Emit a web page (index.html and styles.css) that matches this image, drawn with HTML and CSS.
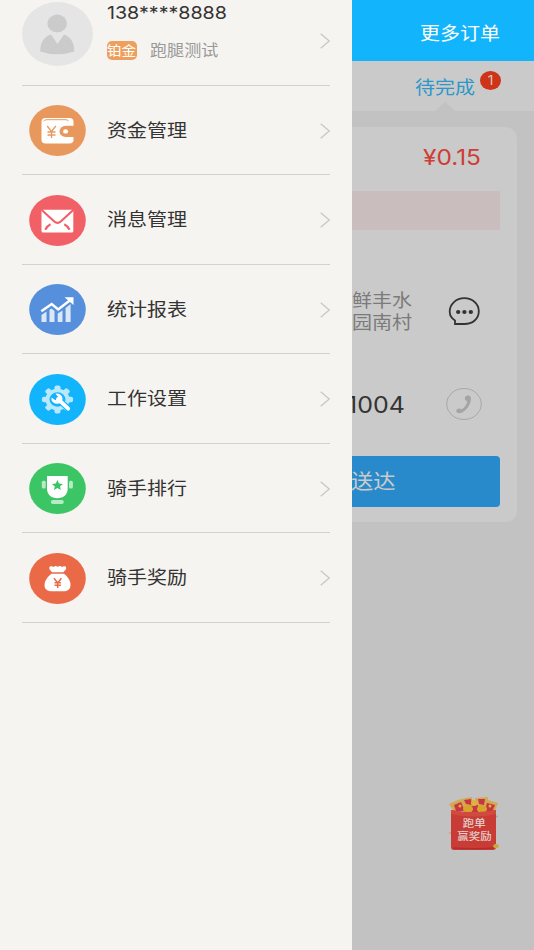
FILE: index.html
```html
<!DOCTYPE html>
<html lang="zh-CN">
<head>
<meta charset="utf-8">
<title>骑手</title>
<link rel="stylesheet" href="styles.css">
</head>
<body>
<div class="screen">
  <aside class="drawer">
    <section class="profile">
      <svg class="avatar" viewBox="0 0 71 64" width="71" height="64">
        <ellipse cx="35.5" cy="32" rx="35.5" ry="32" fill="#e5e5e5"/>
        <ellipse cx="35.2" cy="21.5" rx="9.8" ry="9" fill="#cbcbcb"/>
        <path d="M18.3 49.500C18 41 22 34.500 29 32.500L35.500 42L42 32.500C49 35 52.500 41 52.200 49.500Q44 52.300 35 52.300Q26 52.300 18.300 49.500Z" fill="#cbcbcb"/>
      </svg>
      <div class="who">
        <div class="phone"><span class="wide">138****8888</span></div>
        <div class="meta"><span class="level"><span class="wide">铂金</span></span><span class="name"><span class="wide">跑腿测试</span></span></div>
      </div>
      <svg class="chevron" viewBox="0 0 10 16" width="10" height="16"><path d="M.7 .7L9.300 8L.7 15.300"/></svg>
    </section>
    <nav class="menu">
      <a class="item">
        <svg class="icon" viewBox="0 0 57 51" width="57" height="51">
          <ellipse cx="28.500" cy="25.500" rx="28.300" ry="25.500" fill="#e9985d"/>
          <rect x="12.500" y="13" width="32" height="25.500" rx="4" fill="#fff"/>
          <path d="M14.500 16.100Q15.500 14.700 18 14.700H37Q39 14.700 39.400 16.100" fill="none" stroke="#e9985d" stroke-width="1"/>
          <path d="M45 20.800H36.500A6 5.600 0 0 0 36.500 32H45Z" fill="#e9985d"/>
          <ellipse cx="36.600" cy="26.400" rx="2.500" ry="2.200" fill="#fff"/>
          <path d="M18.200 21L22.500 26.500L26.800 21M22.500 26.500V33M18.500 27H26.500M18.500 30H26.500" fill="none" stroke="#e9985d" stroke-width="1.300"/>
        </svg>
        <span class="label wide">资金管理</span>
        <svg class="chevron" viewBox="0 0 10 16" width="10" height="16"><path d="M.7 .7L9.300 8L.7 15.300"/></svg>
      </a>
      <a class="item">
        <svg class="icon" viewBox="0 0 57 51" width="57" height="51">
          <ellipse cx="28.500" cy="25.500" rx="28.300" ry="25.500" fill="#f16067"/>
          <rect x="12.500" y="14.800" width="31.800" height="22.700" rx="1.500" fill="#fff"/>
          <path d="M13 15.300L25 26.300Q28.500 29.500 32 26.300L44 15.300M16.200 34.800Q18 31 21.500 29.200M40.600 34.800Q38.800 31 35.300 29.200" fill="none" stroke="#f16067" stroke-width="2.100"/>
        </svg>
        <span class="label wide">消息管理</span>
        <svg class="chevron" viewBox="0 0 10 16" width="10" height="16"><path d="M.7 .7L9.300 8L.7 15.300"/></svg>
      </a>
      <a class="item">
        <svg class="icon" viewBox="0 0 57 51" width="57" height="51">
          <ellipse cx="28.500" cy="25.500" rx="28.300" ry="25.500" fill="#568fdb"/>
          <path d="M12.500 31L17.500 27.500V38H12.500ZM20.500 25.800L22.500 24.500L25.500 27V38H20.500ZM28.700 29.500L33.500 26.500V38H28.700ZM36.600 24L41.600 20V38H36.600Z" fill="#dce8f8"/>
          <path d="M12.300 27.200L22.700 20L29.200 25.400L41 16.300" fill="none" stroke="#fff" stroke-width="2.500"/>
          <path d="M35.500 13.200H44.500V21Z" fill="#fff"/>
        </svg>
        <span class="label wide">统计报表</span>
        <svg class="chevron" viewBox="0 0 10 16" width="10" height="16"><path d="M.7 .7L9.300 8L.7 15.300"/></svg>
      </a>
      <a class="item">
        <svg class="icon" viewBox="0 0 57 51" width="57" height="51">
          <ellipse cx="28.500" cy="25.500" rx="28.300" ry="25.500" fill="#12b5fb"/>
          <g transform="translate(28.500 25.500) scale(1.110 1)" fill="#b9e8fd">
            <circle r="10.800"/>
            <rect x="-2.700" y="-14" width="5.400" height="28" rx="1.800"/>
            <rect x="-2.700" y="-14" width="5.400" height="28" rx="1.800" transform="rotate(45)"/>
            <rect x="-2.700" y="-14" width="5.400" height="28" rx="1.800" transform="rotate(90)"/>
            <rect x="-2.700" y="-14" width="5.400" height="28" rx="1.800" transform="rotate(135)"/>
            <circle r="7.200" fill="#12b5fb"/>
          </g>
          <path d="M29 25L40 35.200" stroke="#12b5fb" stroke-width="6.200" stroke-linecap="round"/>
          <path d="M29 25L39.200 34.700" stroke="#fff" stroke-width="3.800" stroke-linecap="round"/>
          <path d="M26.500 19.800A5.600 5.100 0 1 1 22.500 23.600L26.500 26.300L29.600 23.500Z" fill="#fff"/>
        </svg>
        <span class="label wide">工作设置</span>
        <svg class="chevron" viewBox="0 0 10 16" width="10" height="16"><path d="M.7 .7L9.300 8L.7 15.300"/></svg>
      </a>
      <a class="item">
        <svg class="icon" viewBox="0 0 57 51" width="57" height="51">
          <ellipse cx="28.500" cy="25.500" rx="28.300" ry="25.500" fill="#3cc565"/>
          <rect x="12.800" y="17.800" width="3.900" height="7.800" rx="1.500" fill="#b9eac8"/>
          <rect x="40" y="17.800" width="3.900" height="7.800" rx="1.500" fill="#b9eac8"/>
          <rect x="22" y="37" width="12.700" height="3.900" rx="1.700" fill="#b9eac8"/>
          <path d="M18 13H38.700V25.500C38.700 31.500 34.500 35.300 28.350 35.300C22.200 35.300 18 31.500 18 25.500Z" fill="#fff"/>
          <path d="M28.400 17L30 20.500L33.900 20.900L31 23.400L31.900 27L28.400 25.100L24.900 27L25.800 23.400L22.900 20.900L26.800 20.500Z" fill="#3cc565"/>
        </svg>
        <span class="label wide">骑手排行</span>
        <svg class="chevron" viewBox="0 0 10 16" width="10" height="16"><path d="M.7 .7L9.300 8L.7 15.300"/></svg>
      </a>
      <a class="item">
        <svg class="icon" viewBox="0 0 57 51" width="57" height="51">
          <ellipse cx="28.500" cy="25.500" rx="28.300" ry="25.500" fill="#ea6a47"/>
          <path d="M23 19.300C21.800 17.500 20 16.500 20.300 14.700C20.700 12.900 23 12.800 24.500 14C26 12.500 27.600 12.800 28.700 14C29.800 12.800 31.500 12.500 33 14C34.600 12.800 36.800 13 37.200 14.700C37.500 16.500 35.600 17.500 34.400 19.300Z" fill="#fff"/>
          <path d="M22.500 20.800H35C38 23 41.500 27.500 41.500 32C41.500 36.500 38.500 38.300 34 38.300H23.200C18.500 38.300 15.500 36.500 15.500 32C15.500 27.500 19.500 23 22.500 20.800Z" fill="#fff"/>
          <path d="M25 25.300L28.700 30L32.400 25.300M28.700 30V35M25.500 29.800H31.900M25.500 32.300H31.900" fill="none" stroke="#ea6a47" stroke-width="1.500"/>
        </svg>
        <span class="label wide">骑手奖励</span>
        <svg class="chevron" viewBox="0 0 10 16" width="10" height="16"><path d="M.7 .7L9.300 8L.7 15.300"/></svg>
      </a>
    </nav>
  </aside>
  <main class="orders">
    <header class="topbar"><span class="wide">更多订单</span></header>
    <div class="tabs">
      <span class="tab wide">待完成</span>
      <span class="count"><span class="wide">1</span></span>
      <span class="pointer"></span>
    </div>
    <section class="card">
      <div class="price"><span class="wide">¥0.15</span></div>
      <div class="notice"></div>
      <div class="row address">
        <p class="wide">鲜丰水<br>园南村</p>
        <svg class="chat" viewBox="0 0 32 29" width="32" height="29">
          <path d="M7 27V23.500C3.500 21.500 1.700 18.300 1.700 14.600C1.700 7 8.200 1.200 16.300 1.200C24.600 1.200 30.800 7 30.800 14.300C30.800 21.800 24.700 27 16.300 27Z" fill="none" stroke="#333" stroke-width="1.800"/>
          <ellipse cx="10.200" cy="15" rx="2.200" ry="1.900" fill="#333"/><ellipse cx="16.400" cy="15" rx="2.200" ry="1.900" fill="#333"/><ellipse cx="22.800" cy="15" rx="2.200" ry="1.900" fill="#333"/>
        </svg>
      </div>
      <div class="row contact">
        <span class="tail wide">1004</span>
        <svg class="call" viewBox="0 0 36 32" width="36" height="32">
          <ellipse cx="18" cy="16" rx="17.400" ry="15.500" fill="none" stroke="#a3a4a4" stroke-width=".9"/>
          <path d="M19.500 8.500C21 7 24 7.200 24.800 9.500C25.600 14 22 22 15.500 24.700C13.500 25.500 11 25.500 10.200 23.300C10 21.300 12.300 20 14 20.500L15.300 21.500C18.500 20 20.700 16.500 21.200 13.300L19.500 12.300C18.500 11 18.700 9.500 19.500 8.500Z" fill="#a3a4a4"/>
        </svg>
      </div>
      <button class="deliver"><span class="wide">送达</span></button>
    </section>
    <div class="promo">
      <svg viewBox="0 0 52 56" width="52" height="56">
        <path d="M1 8L12 3L17 13L7 17ZM13 3L24 1L25 14H14ZM27 2L40 1L39 14H28ZM40 4L50 7L46 17L37 14Z" fill="#d3aa50"/>
        <path d="M6 9L13 6L17 15H8ZM16 4L23 3L24 9L18 8ZM30 3L37 3L36 9L31 8ZM39 7L47 9L44 16H36ZM22 10L30 9L31 16H22Z" fill="#c83545"/>
        <ellipse cx="20" cy="13" rx="5" ry="4" fill="#d8a52c"/><ellipse cx="34" cy="13" rx="5" ry="4" fill="#d8a52c"/><circle cx="26" cy="7" r="3" fill="#dfb23b"/><circle cx="12" cy="10" r="1.500" fill="#dfb23b"/><circle cx="42" cy="10" r="1.500" fill="#dfb23b"/>
        <path d="M3 14Q25 18.500 48 14V51Q48 54 45 54H6Q3 54 3 51Z" fill="#c93c36"/>
        <path d="M3 14Q25 18.500 48 14V18Q25 23 3 18Z" fill="#d14a3e"/>
        <path d="M5 52Q25 53.500 46 52" fill="none" stroke="#b12d2c" stroke-width="1.300"/>
        <ellipse cx="48" cy="50" rx="2.800" ry="2" fill="#c9a83c"/><circle cx="49" cy="20.500" r="1" fill="#8eae9b"/><circle cx="2" cy="37" r=".9" fill="#c7a969"/>
      </svg>
      <div class="promo-text"><span class="wide">跑单</span><span class="wide">赢奖励</span></div>
    </div>
  </main>
</div>
</body>
</html>
```
FILE: styles.css
```css
* { box-sizing: border-box; }
body {
  margin: 0;
  font-family: Inter, "Noto Sans CJK SC", sans-serif;
  font-size: 18px;
  color: #333;
}
svg { display: block; flex: none; }
p { margin: 0; }
.screen {
  display: grid;
  grid-template-columns: 352px 182px;
  height: 950px;
  overflow: hidden;
}
.wide {
  display: inline-block;
  white-space: nowrap;
  transform: scaleX(1.11);
  transform-origin: left center;
}
.drawer { background: #f6f4f0; padding: 0 22px; }
.profile {
  display: flex;
  height: 85.500px;
  padding-top: 2px;
  border-bottom: 1px solid #d3d2cf;
}
.who { flex: 1; margin-left: 14px; }
.phone { height: 20px; line-height: 22px; font-size: 17.700px; }
.meta { display: flex; margin-top: 19px; height: 19px; line-height: 19px; }
.level {
  width: 29.500px;
  border-radius: 5px;
  background: #ef9f5d;
  color: #fff;
  font-size: 13px;
}
.name { margin-left: 13px; font-size: 15.400px; color: #999; }
.profile .chevron { margin-top: 31px; }
.chevron { fill: none; stroke: #c8c7c5; stroke-width: 1.300; }
.item {
  display: flex;
  align-items: center;
  height: 89.500px;
  border-bottom: 1px solid #d3d2cf;
  padding: 2px 0 0 6.500px;
}
.label { margin-left: 21.500px; line-height: 26px; }
.item .chevron { margin-left: auto; }
.orders { background: #c2c2c2; overflow: hidden; }
.topbar {
  height: 61px;
  padding-left: 68px;
  background: #12b5fb;
  color: #fff;
  line-height: 67px;
}
.tabs {
  position: relative;
  display: flex;
  height: 50px;
  padding-left: 62.500px;
  background: #cacaca;
}
.tab { width: 54px; line-height: 53px; color: #2c98c9; }
.count {
  width: 21px;
  height: 19px;
  margin: 10px 0 0 11.500px;
  border-radius: 50%;
  background: #ce3418;
  color: #d6cbc8;
  font-size: 12.500px;
  line-height: 20px;
  text-align: center;
}
.pointer {
  position: absolute;
  left: 83px;
  bottom: 0;
  border: solid transparent;
  border-width: 0 10px 9px;
  border-bottom-color: #c2c2c2;
}
.card {
  width: 165px;
  height: 395px;
  margin-top: 16px;
  padding-right: 17.500px;
  border-radius: 0 12px 11px 0;
  background: #cacaca;
}
.price { height: 64px; padding: 15px 0 0 70.500px; font-size: 22px; line-height: 30px; color: #cd3e35; }
.notice { height: 39px; background: #c9bebd; }
.row { display: flex; justify-content: space-between; }
.address { padding: 60px 20px 0 0; line-height: 21.500px; color: #7b7b7b; }
.address .chat { margin-top: 7px; }
.contact { margin-top: 55px; padding-right: 18px; line-height: 34px; height: 32px; font-size: 22.500px; }
.tail { margin-left: -5px; }
.deliver {
  display: block;
  width: 100%;
  height: 51.500px;
  margin-top: 35.500px;
  padding: 0;
  border: 0;
  border-radius: 0 4px 4px 0;
  background: #288acb;
  color: #cacaca;
  font: 20px/53px Inter, "Noto Sans CJK SC", sans-serif;
  text-align: left;
}
.deliver .wide { margin-left: -1px; }
.promo { position: relative; width: 52px; margin: 274px 0 0 96px; }
.promo-text {
  position: absolute;
  inset: 21px 0 auto;
  display: flex;
  flex-direction: column;
  align-items: center;
  font-size: 10.300px;
  font-weight: 500;
  line-height: 13px;
  color: #e0cfcc;
}
.count .wide, .promo-text .wide { transform-origin: center; }
```
